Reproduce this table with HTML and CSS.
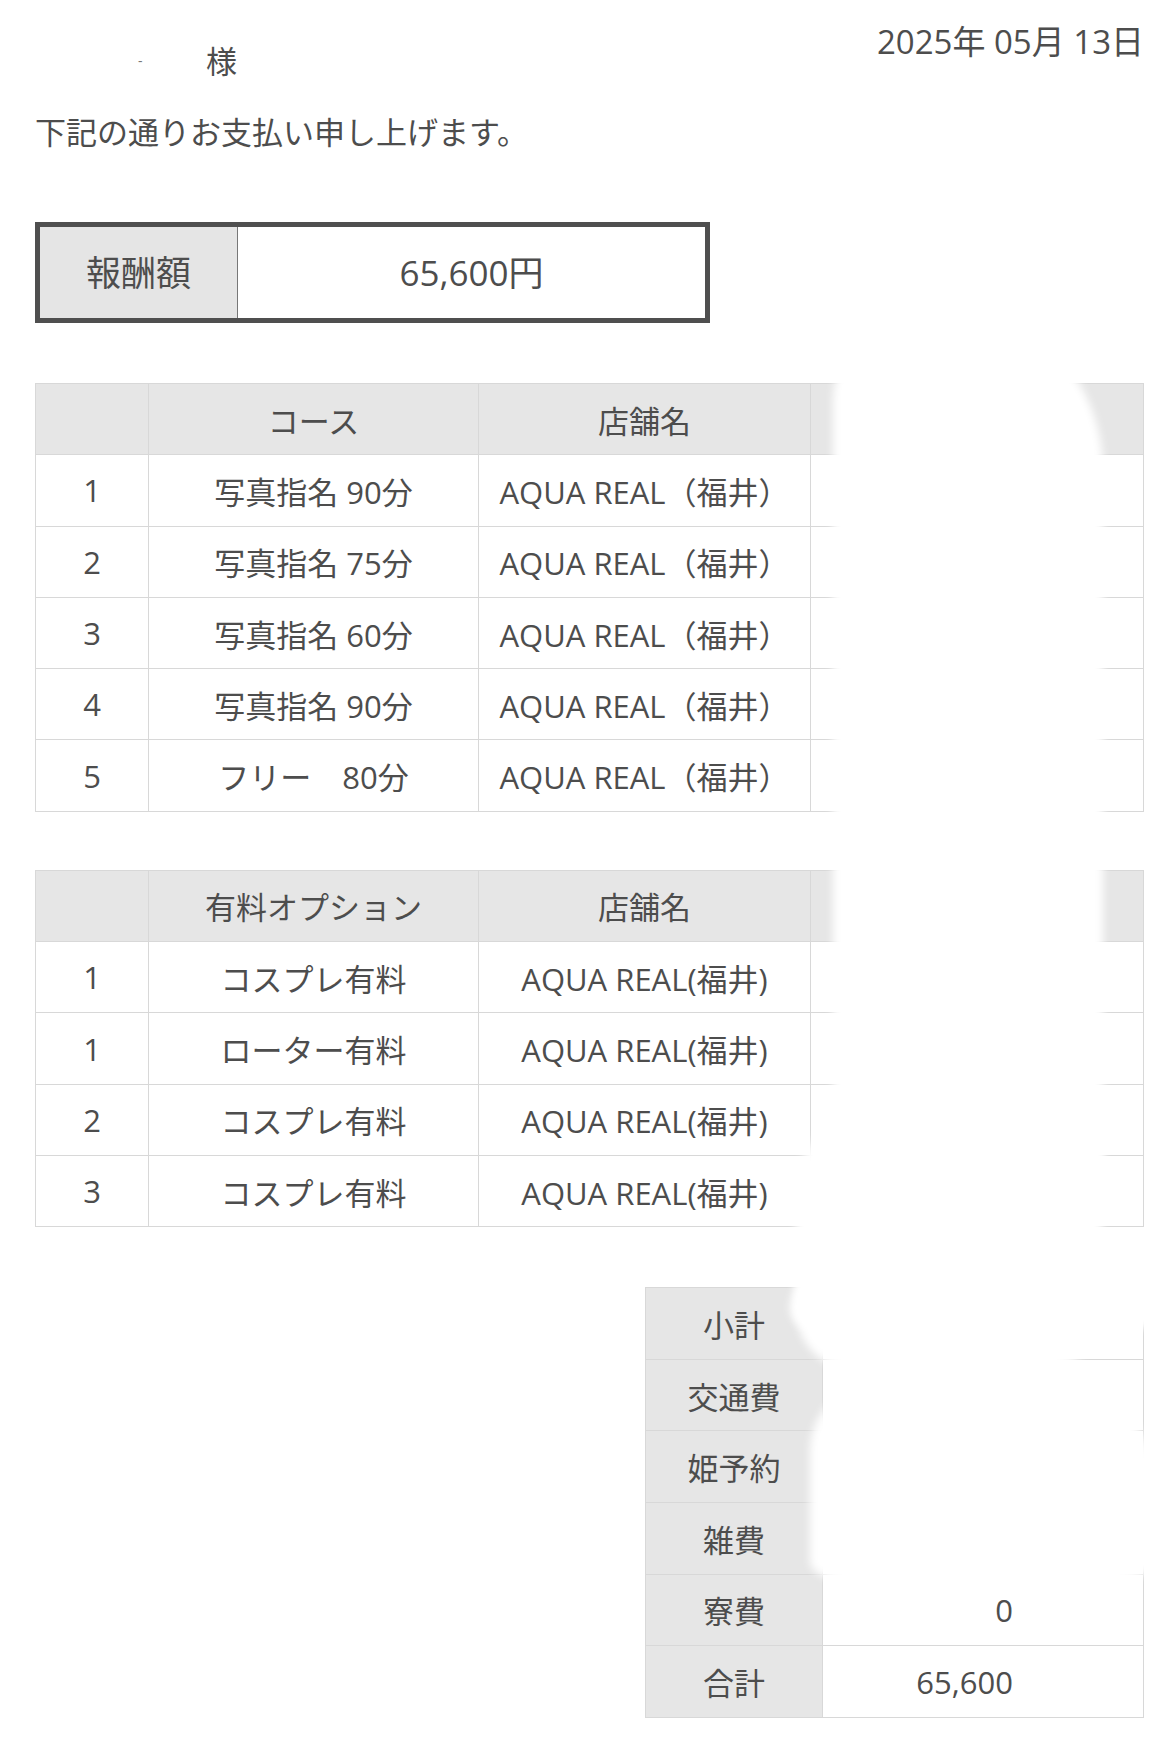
FILE: index.html
```html
<!DOCTYPE html>
<html lang="ja">
<head>
<meta charset="utf-8">
<title>支払明細</title>
<link rel="stylesheet" href="styles.css">
</head>
<body>
<div class="page">
  <header class="top">
    <div class="name"><span class="name-mask">-</span><span class="sama">様</span></div>
    <div class="date">2025年 05月 13日</div>
  </header>
  <p class="message">下記の通りお支払い申し上げます。</p>

  <div class="reward">
    <div class="reward-label">報酬額</div>
    <div class="reward-value">65,600円</div>
  </div>

  <table class="list">
    <colgroup><col class="c-no"><col class="c-name"><col class="c-shop"><col></colgroup>
    <thead>
      <tr><th></th><th>コース</th><th>店舗名</th><th></th></tr>
    </thead>
    <tbody>
      <tr><td>1</td><td>写真指名 90分</td><td>AQUA REAL（福井）</td><td></td></tr>
      <tr><td>2</td><td>写真指名 75分</td><td>AQUA REAL（福井）</td><td></td></tr>
      <tr><td>3</td><td>写真指名 60分</td><td>AQUA REAL（福井）</td><td></td></tr>
      <tr><td>4</td><td>写真指名 90分</td><td>AQUA REAL（福井）</td><td></td></tr>
      <tr><td>5</td><td>フリー　80分</td><td>AQUA REAL（福井）</td><td></td></tr>
    </tbody>
  </table>

  <table class="list list-opt">
    <colgroup><col class="c-no"><col class="c-name"><col class="c-shop"><col></colgroup>
    <thead>
      <tr><th></th><th>有料オプション</th><th>店舗名</th><th></th></tr>
    </thead>
    <tbody>
      <tr><td>1</td><td>コスプレ有料</td><td>AQUA REAL(福井)</td><td></td></tr>
      <tr><td>1</td><td>ローター有料</td><td>AQUA REAL(福井)</td><td></td></tr>
      <tr><td>2</td><td>コスプレ有料</td><td>AQUA REAL(福井)</td><td></td></tr>
      <tr><td>3</td><td>コスプレ有料</td><td>AQUA REAL(福井)</td><td></td></tr>
    </tbody>
  </table>

  <table class="summary">
    <tbody>
      <tr><th>小計</th><td></td></tr>
      <tr><th>交通費</th><td></td></tr>
      <tr><th>姫予約</th><td></td></tr>
      <tr><th>雑費</th><td></td></tr>
      <tr><th>寮費</th><td>0</td></tr>
      <tr><th>合計</th><td>65,600</td></tr>
    </tbody>
  </table>

  <div class="mask mask-a"></div>
  <div class="mask mask-b"></div>
  <div class="mask mask-c"></div>
  <div class="mask mask-d"></div>
</div>
</body>
</html>
```

FILE: styles.css
```css
html, body {
  margin: 0;
  background: #ffffff;
}

body {
  font-family: "Open Sans", "Noto Sans CJK JP", sans-serif;
  color: #4d4d4d;
}

.page {
  position: relative;
  padding: 23px 26px 28px 35px;
}

.top {
  display: flex;
  justify-content: space-between;
  align-items: flex-start;
}

.name {
  margin-top: 19px;
  display: flex;
  align-items: center;
  font-size: 31px;
  line-height: 38px;
}

.name-mask {
  width: 171px;
  box-sizing: border-box;
  padding-left: 103px;
  font-size: 14px;
  color: #777;
}

.date {
  font-size: 33px;
  line-height: 38px;
}

.message {
  margin: 32px 0 0;
  font-size: 31px;
  line-height: 40px;
}

.reward {
  margin-top: 70px;
  display: flex;
  width: 675px;
  height: 101px;
  box-sizing: border-box;
  border: 5px solid #4f4f4f;
}

.reward-label {
  width: 198px;
  background: #e5e5e5;
  border-right: 1px solid #777;
  display: flex;
  align-items: center;
  justify-content: center;
  font-size: 35px;
  padding-bottom: 4px;
  box-sizing: border-box;
}

.reward-value {
  flex: 1;
  display: flex;
  align-items: center;
  justify-content: center;
  font-size: 35px;
  padding-bottom: 4px;
  box-sizing: border-box;
}

.list {
  margin-top: 60px;
  width: 100%;
  border-collapse: collapse;
  table-layout: fixed;
  font-size: 31px;
}

.list-opt {
  margin-top: 58px;
}

.c-no { width: 113px; }
.c-name { width: 330px; }
.c-shop { width: 332px; }

.list th,
.list td {
  border: 1px solid #d8d8d8;
  height: 70.3px;
  padding: 0;
  text-align: center;
  font-weight: normal;
  white-space: nowrap;
}

.list th {
  background: #e6e6e6;
}

.summary {
  margin: 60px 0 0 auto;
  width: 499px;
  border-collapse: collapse;
  table-layout: fixed;
  font-size: 31px;
}

.summary th,
.summary td {
  border: 1px solid #d8d8d8;
  height: 70.6px;
  padding: 0;
  font-weight: normal;
}

.summary th {
  width: 176px;
  background: #e6e6e6;
  text-align: center;
}

.summary td {
  text-align: right;
  padding-right: 130px;
}

.mask {
  position: absolute;
  background: #ffffff;
  filter: blur(4px);
}

.mask-a {
  left: 833px;
  top: 310px;
  width: 270px;
  height: 900px;
  border-radius: 110px 150px 30px 30px / 90px 160px 30px 30px;
}

.mask-b {
  left: 796px;
  top: 1110px;
  width: 306px;
  height: 260px;
  border-radius: 80px 30px 60px 60px;
}

.mask-c {
  left: 810px;
  top: 1370px;
  width: 345px;
  height: 222px;
  border-radius: 100px 140px 120px 110px / 80px 110px 30px 30px;
}

.mask-d {
  left: 790px;
  top: 1268px;
  width: 370px;
  height: 60px;
  border-radius: 60px 10px 10px 30px;
}
```
